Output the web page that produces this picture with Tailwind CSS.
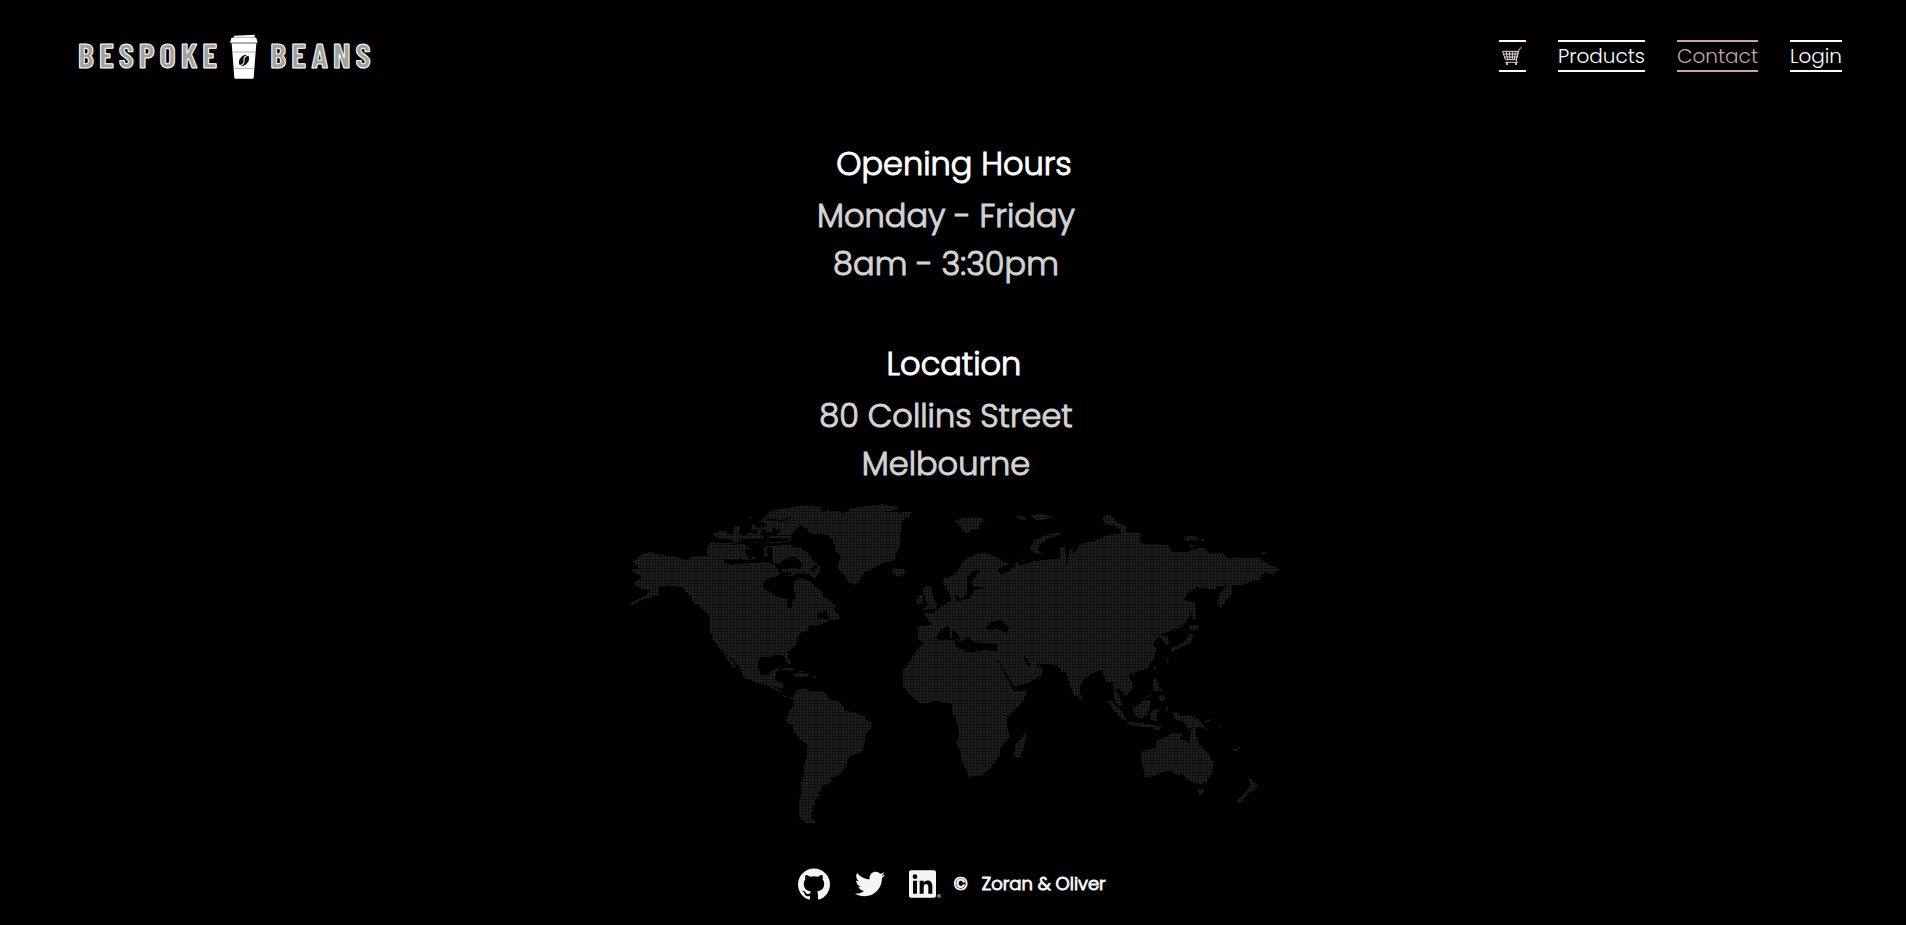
<!DOCTYPE html>
<html lang="en">
<head>
<meta charset="utf-8">
<meta name="viewport" content="width=device-width, initial-scale=1">
<title>Bespoke Beans - Contact</title>
<script src="https://cdn.jsdelivr.net/npm/@tailwindcss/browser@4"></script>
</head>
<body class="min-h-screen bg-black text-white font-['Poppins','Inter',sans-serif]">
<header class="flex items-center justify-between pt-8 pr-16 pl-[78px]">
  <a href="#" aria-label="Bespoke Beans" class="flex h-12 items-center font-['Barlow_Condensed','Roboto_Condensed','Roboto',sans-serif] text-[34px] leading-8 font-bold tracking-[5px] text-neutral-400 [-webkit-text-stroke:1px_white]">
    <span class="pb-0.5">BESPOKE</span>
    <svg class="mr-3 ml-2 h-[45px] w-7" viewBox="0 0 84 135" aria-hidden="true">
      <path fill="#fff" d="M12 5 74 2l0 8 5 2 4 14H0l4-14 8-2zM5 28h74l-8 103q0 3-4 3H17q-4 0-4-3z"/>
      <path fill="none" stroke="#888" stroke-width="2" d="M9 10h67M3 27h78M7 54h71M14 103h57"/>
      <g transform="rotate(38 42 79)"><ellipse cx="42" cy="79" rx="13" ry="19" fill="#111"/><path fill="none" stroke="#fff" stroke-width="3" d="M43 59q-10 11-1 20t0 20"/></g>
    </svg>
    <span class="pb-0.5">BEANS</span>
  </a>
  <nav class="flex gap-8 text-[20px] leading-7 font-light">
    <a href="#" aria-label="Cart" class="flex w-[27px] items-center justify-center border-y-2 border-white">
      <svg class="h-5 w-5" viewBox="0 0 60 60" fill="none" aria-hidden="true">
        <path d="M2 16h46l-5 25H10zM5 24h41M8 33h37M13 17l4 24M22 17l2 24M31 17v24M40 17l-3 24" stroke="#ddd" stroke-width="3"/>
        <path d="M52 9 43 42l3 7H10" stroke="#ccc" stroke-width="3"/>
        <path d="m52 9 7-5" stroke="#e23b3b" stroke-width="6"/>
        <path d="M15 49v8M42 49v8" stroke="#ddd" stroke-width="5"/>
      </svg>
    </a>
    <a href="#" class="border-y-2 border-white">Products</a>
    <a href="#" class="border-y-2 border-[#c4a4a4] text-[#c4a4a4]">Contact</a>
    <a href="#" class="border-y-2 border-white">Login</a>
  </nav>
</header>
<main class="flex flex-col items-center pt-15 pl-0.5 text-center text-[32px] leading-12 font-light [-webkit-text-stroke:1px_currentColor]">
  <section>
    <h1 class="mb-1">Opening Hours</h1>
    <div class="pr-4 text-[#d3d3d3]"><p>Monday - Friday</p><p>8am - 3:30pm</p></div>
  </section>
  <section class="mt-13">
    <h2 class="mb-1">Location</h2>
    <div class="pr-4 text-[#d3d3d3]"><p>80 Collins Street</p><p>Melbourne</p></div>
  </section>
  <svg class="mt-3.5 w-[652px] max-w-full" viewBox="54 36 1956 963" role="img" aria-label="World map" shape-rendering="crispEdges">
    <defs><pattern id="grid" width="9" height="9" patternUnits="userSpaceOnUse"><path d="M0 0h9v3H0zM0 0h3v9H0z" fill="#000" fill-opacity=".5"/></pattern></defs>
    <g fill="#202020">
      <!-- North America, the Arctic islands, Greenland and Iceland -->
      <path d="M68 214l32-24 22-4 28 10 35 1 45 13 20-12 40-1 40 3 20 18 45 2 65-5 30 7 15 18v18l-25 4-22 18 4 15 38 25 30 6v24l15 5 3-23 9-10-7-32 5-20 25-5 20 10 15 15 17 10 8 20 20 10 15 18-3 12 18 20-5 10-20-2-25 12-22 8-18-3-10 17-18 6-12 17 2 15-27 25-2 15 10 20-8 5-13-27-27-6-15 10-30-2-8 30 13 25h23l7-15 25-5-10 10-5 25 25 10v16l-30-6-50-14-35-16-10-20-25-30-20-20 28 40-6 6-22-31-15-25-23-25-12-35v-40l-25-25-5-10-20-5-10-25-25-23-40-7-27 7v23l-20 5-23 5-45 23-4-6 39-20 25-14-2-8-23-2-27-18 30-18-34-22 26-4z"/>
      <path d="M625 368l20-5 12 6-6 8 8 8-10 6-12-6-14 2z" fill="#000"/>
      <path d="M290 182l10-24 20-5 5-12-18-3 10-12 30-4 5 10 15 2 5-28 18 4-4 20 20 10 12-17-8-15 20-5 12 12 14-5-2 20 8 18-20 10-50-3-30 10 40-3 10 10 10 2-15 18 12 15 15-8 15 20-20 4-25-8-15 5-25-5-40 2-30-20z"/>
      <path d="M415 78l15 6-8 4zM448 95l20-18 12-14 45-8 60-10 50 8-5 14 10 8-30 12-10 15-30 2-10 14-20 18-45-2-20-8-20-10 15-10-10-10z"/>
      <path d="M455 140l90-2-4 18-70 4zM460 170l70-5 45 10 20 14 14 22 25 20-5 15-15 20-20-15-30-2-15 10-50-8 20-14 25-2 5-22-30-5-10 15-20-5-5-25-20 10z"/>
      <path d="M575 110l10-15 30-12 5-16 30-6 40 2 10 6 15-4 5-10 45-6 50-6 50 8-5 10-50 2 60 5 35-2-3 10-25 15-5 30-3 50-10 20-5 20-35 8-25 12-15 10-15 4-15 25-12 14-20-5-15-25-20-20 5-20 5-15-15-15-5-30-20-20-55-4-5-15z"/>
      <path d="M842 232l12 6 24-2 12 6-8 12-20 7-12-13zM512 538l25-6 18 8-8 4zM548 554l22-6 25 6-5 8h-25zM608 559h10v6h-10zM568 542h14v5h-14z"/>
      <path fill="#000" d="M300 148h60l20 6-20 6-45-2zM378 146l70 0 12-4 80 4 0 6-78 6-60-2zM405 178l22 0 6 10 22-6 6 8-20 6-16 6-18-10zM470 172l14 0 4 22-14 4zM345 206l30 4 20-6 20 8 40-8 8 12-40 4-60 4-20-6zM525 206l30-6 22 22-8 16-26-6-14 10-6-14 12-6zM505 240l22 8 16-4 4 10-30 2zM410 108l14-4 0 14 20 4-8 10-26-6zM470 84l40 6 30-8 0 4-24 10-46-8zM490 114l22 8-12 14-14-6zM600 238l20-14 4 6-14 16z"/>
      <!-- Central and South America -->
      <g transform="translate(390 450)"><path d="M0 82 15 105 55 128 92 138 118 150 124 162 145 171 160 171 165 160 172 150 185 150 194 144 205 152 240 153 258 160 268 175 278 182 295 182 305 192 316 212 345 218 375 230 378 238 392 246 396 256 392 266 378 282 372 318 362 338 345 342 328 350 320 365 318 380 300 402 285 412 268 410 276 422 262 434 245 436 244 450 232 458 240 464 230 475 220 480 226 496 216 502 220 514 212 522 213 534 228 549 195 549 178 530 177 480 183 470 182 425 193 410 193 375 200 355 203 315 180 295 162 275 158 255 142 248 138 238 148 225 146 212 162 198 162 180 150 175 130 168 118 155 90 140 50 128 10 110Z"/></g>
      <!-- Europe, Africa and western Asia -->
      <g transform="translate(810 0)">
        <path d="M70 542 92 510 118 470 132 458 114 448 112 410 148 408 155 400 145 388 130 370 160 368 190 345 215 330 205 305 190 282 190 268 220 256 235 240 248 218 262 205 290 192 315 187 345 200 388 222 365 232 348 240 362 252 385 245 400 232 460 215 490 210 540 205V540L560 545 550 545 530 525 475 520 455 528 432 495 430 505 448 530 470 525 490 540 480 560 440 580 405 592 385 560 352 505 375 555 403 605 440 600 435 625 415 650 382 680 380 710 390 740 360 775 360 795 335 830 305 858 268 860 245 810 240 780 228 760 238 735 230 690 216 670 216 640 165 632 125 643 95 620 70 590Z"/>
        <path d="M163 448 178 424 200 410 215 414 232 430 240 448 250 455 262 440 280 455 300 458 350 462 355 485 320 480 265 487 225 470 222 450ZM318 412 335 393 365 390 388 412 380 428 355 418 320 420ZM262 310 262 260 285 240 300 242 275 275 280 292 315 289 315 294 284 300 270 325 230 335 222 312 245 325ZM400 218h20v8h-20z" fill="#000"/>
        <path d="M208 412l8 0 2 32-8 0zM234 400l12 8 24 34-8 2-24-28zM280 436l16-6 8 18-14 8zM222 446l20 4 2 6z"/>
        <path d="M222 92l30-7 40-4 24 10-20 12 0 16-18 0-20 12-12-14zM405 78l30 2 5 10-18-2zM450 78l35-7 35 12-45 9zM450 176l12-24 33-16 45-10 0 9-42 14-22 18-2 14 16 14-26-6zM404 218l14 0 0 10-14 0zM428 206l10 4-8 4zM108 332l8-16 14-2-2 24-16 6zM128 300l8-12 20 2 2 30 14 22-6 14-40 4 18-14-8-22zM402 802l4-40 20-20 11-14 2 16-10 36-10 20z"/>
      </g>
      <!-- Asia and Oceania -->
      <g transform="translate(1350 0)">
        <path d="M0 170 15 170 20 230 30 175 45 190 62 160 95 155 145 135 195 130 240 130 240 160 325 165 335 185 385 185 400 176 435 175 450 190 490 190 500 203 600 203 620 220 658 237 640 253 612 246 600 268 570 275 550 285 515 285 515 310 480 355 473 340 478 315 500 285 470 290 465 298 410 292 385 308 370 330 395 335 390 380 365 410 325 425 270 440 300 435 322 440 330 462 318 465 300 440 285 450 280 460 288 475 285 500 262 535 230 545 205 552 222 590 200 617 180 600 168 595 185 635 188 655 165 635 158 575 140 575 125 540 100 548 70 570 60 590 58 614 42 618 24 568 20 545 0 545Z"/>
        <path d="M58 612l12 10-2 8-10-6zM125 84l20-12 14 10 12 16 28 10-3 14 14 10-30 2 4-14-22-14-25-4zM370 144l14-6 25 2 4 10-35 2zM420 146l24 4-16 2zM386 162l20 5-12 4zM598 190l20-4-6 8zM394 332l10 6 6 40-10 14-6-18zM388 404l28 0-4 16-22 0zM390 430l12 6-10 24-25 10-32 16-3-10 40-20zM316 516l12-14-4 16zM278 528l8-2-2 16zM216 548l12 0-6 10zM278 566l12-2 6 30 12 8-28 0zM262 620l12-16-8 20zM290 622l18-8 8 14-10 8zM140 632l14 0 30 30 16 28-16-2zM196 694l70 8 40 8-10 12-20-10-60-4zM218 655l36-25 18 4-8 36-20 16-20-10zM276 660l28-4-14 12 2 26-22-6zM318 650l8 6-6 12zM336 664l16 2 10 14 20-6 30 10 18 22 14 12-24-6-36 4-14-22-22-4zM436 692l18-6-4 8-14 6zM478 706l10 3-8 3z"/>
        <path d="M245 785 288 772 290 752 326 738 334 728 368 728 362 746 388 758 396 708 404 708 410 744 418 766 446 794 460 818 456 850 440 876 422 882 390 876 370 854 362 848 356 856 330 843 305 846 280 858 252 862 250 830 241 812ZM412 898h22l-8 18-8 0zM516 772l10 6 18-12-18 22zM564 860l20 18 12 6-14 16-16 8-16 22-12 10-10-6 28-26 16-22z"/>
      </g>
    </g>
    <path d="M54 36h1956v963H54z" fill="url(#grid)"/>
  </svg>
</main>
<footer class="mt-[45px] flex items-center justify-center pr-0.5 text-[18px] leading-8 font-light text-[#f5f5f5] [-webkit-text-stroke:1px_currentColor]">
  <a href="#" aria-label="GitHub"><svg class="h-8 w-8" viewBox="0 0 24 24" fill="currentColor"><path stroke="none" d="M12 .297c-6.63 0-12 5.373-12 12 0 5.303 3.438 9.8 8.205 11.385.6.113.82-.258.82-.577 0-.285-.01-1.04-.015-2.04-3.338.724-4.042-1.61-4.042-1.61C4.422 18.07 3.633 17.7 3.633 17.7c-1.087-.744.084-.729.084-.729 1.205.084 1.838 1.236 1.838 1.236 1.07 1.835 2.809 1.305 3.495.998.108-.776.417-1.305.76-1.605-2.665-.3-5.466-1.332-5.466-5.93 0-1.31.465-2.38 1.235-3.22-.135-.303-.54-1.523.105-3.176 0 0 1.005-.322 3.3 1.23.96-.267 1.98-.399 3-.405 1.02.006 2.04.138 3 .405 2.28-1.552 3.285-1.23 3.285-1.23.645 1.653.24 2.873.12 3.176.765.84 1.23 1.91 1.23 3.22 0 4.61-2.805 5.625-5.475 5.92.42.36.81 1.096.81 2.22 0 1.606-.015 2.896-.015 3.286 0 .315.21.69.825.57C20.565 22.092 24 17.592 24 12.297c0-6.627-5.373-12-12-12"/></svg></a>
  <a href="#" aria-label="Twitter" class="ml-[25px]"><svg class="h-[30px] w-[30px]" viewBox="0 0 24 24" fill="currentColor"><path d="M23.954 4.569c-.885.389-1.83.654-2.825.775 1.014-.611 1.794-1.574 2.163-2.723-.951.555-2.005.959-3.127 1.184-.896-.959-2.173-1.559-3.591-1.559-2.717 0-4.92 2.203-4.92 4.917 0 .39.045.765.127 1.124C7.691 8.094 4.066 6.13 1.64 3.161c-.427.722-.666 1.561-.666 2.475 0 1.71.87 3.213 2.188 4.096-.807-.026-1.566-.248-2.228-.616v.061c0 2.385 1.693 4.374 3.946 4.827-.413.111-.849.171-1.296.171-.314 0-.615-.03-.916-.086.631 1.953 2.445 3.377 4.604 3.417-1.68 1.319-3.809 2.105-6.102 2.105-.39 0-.779-.023-1.17-.067 2.189 1.394 4.768 2.209 7.557 2.209 9.054 0 13.999-7.496 13.999-13.986 0-.209 0-.42-.015-.63.961-.689 1.8-1.56 2.46-2.548z"/></svg></a>
  <a href="#" aria-label="LinkedIn" class="ml-6"><svg class="h-7 w-8" viewBox="0 0 96 84"><rect x="0" y="1" width="81" height="82" rx="6" fill="#f5f5f5"/><g fill="#000"><circle cx="18" cy="20" r="7"/><path d="M12 32h12v39H12zM32 32h12v6c7-11 26-9 26 10v23H58V51c0-12-14-11-14 0v20H32z"/></g><g fill="none" stroke="#999" stroke-width="2"><circle cx="90" cy="78" r="5"/><path d="M88 81v-6h4v3h-3l3 3"/></g></svg></a>
  <span class="ml-3">©</span><span class="ml-3.5">Zoran &amp; Oliver</span>
</footer>
</body>
</html>
